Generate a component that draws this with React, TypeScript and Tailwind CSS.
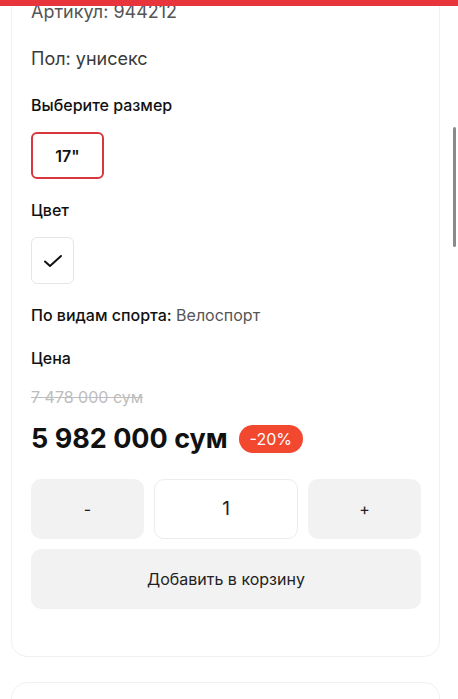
import React from 'react'

const font = { fontFamily: 'Inter, "Noto Sans", sans-serif' }

export default function App() {
  return (
    <div className="relative h-[699px] w-[458px] overflow-hidden bg-white text-[#111]" style={font}>
      {/* product card */}
      <div className="ml-[11px] mr-[18px] mt-[-40px] rounded-[16px] border border-[#f1f1f1] pl-[19px] pr-[18px] pt-[39px] pb-[47px]">
        <div className="text-[18px] leading-[24px] text-[#555]">Артикул: 944212</div>
        <div className="mt-[23px] text-[18px] leading-[24px] text-[#3a3a3a]">Пол: унисекс</div>

        <div className="mt-[23px] text-[16px] font-medium leading-[22px]">Выберите размер</div>
        <div className="mt-[16px] flex h-[47px] w-[73px] items-center justify-center rounded-[6px] border-2 border-[#d8383d] text-[16px] font-semibold">
          17"
        </div>

        <div className="mt-[20px] text-[16px] font-medium leading-[22px]">Цвет</div>
        <div className="mt-[16px] flex h-[47px] w-[43px] items-center justify-center rounded-[6px] border border-[#e6e6e6]">
          <svg width="20" height="14" viewBox="0 0 20 14" fill="none">
            <path d="M2 7.5 7 12 18 2" stroke="#111" strokeWidth="2" strokeLinecap="round" strokeLinejoin="round" />
          </svg>
        </div>

        <div className="mt-[20px] text-[16px] leading-[22px]">
          <span className="font-medium">По видам спорта:</span> <span className="text-[#555]">Велоспорт</span>
        </div>

        <div className="mt-[21px] text-[16px] font-medium leading-[22px]">Цена</div>
        <div className="mt-[18px] text-[16px] leading-[20px] text-[#bdbdbd] line-through">7 478 000 сум</div>
        <div className="mt-[17px] flex h-[30px] items-center gap-[11px]">
          <span className="text-[27px] font-bold leading-[30px]">5 982 000 сум</span>
          <span className="flex h-[28px] w-[64px] items-center justify-center rounded-full bg-[#f2482f] text-[16px] text-white">
            -20%
          </span>
        </div>

        <div className="mt-[25px] flex gap-[10px]">
          <button className="flex h-[60px] flex-1 items-center justify-center rounded-[10px] bg-[#f2f2f2] text-[16px] text-[#222]">-</button>
          <div className="flex h-[60px] w-[144px] items-center justify-center rounded-[10px] border border-[#ececec] bg-white text-[19px] text-[#222]">1</div>
          <button className="flex h-[60px] flex-1 items-center justify-center rounded-[10px] bg-[#f2f2f2] text-[16px] text-[#222]">+</button>
        </div>
        <button className="mt-[10px] flex h-[60px] w-full items-center justify-center rounded-[10px] bg-[#f2f2f2] text-[16px] text-[#222]">
          Добавить в корзину
        </button>
      </div>

      {/* next card */}
      <div className="ml-[11px] mr-[18px] mt-[25px] h-[120px] rounded-[16px] border border-[#f1f1f1]" />

      {/* header strip */}
      <div className="absolute left-0 right-0 top-0 h-[6px] bg-[#e8353b]" />
      {/* scrollbar */}
      <div className="absolute left-[453px] top-[127px] h-[120px] w-[3px] rounded-full bg-[#8a8a8a]" />
    </div>
  )
}
